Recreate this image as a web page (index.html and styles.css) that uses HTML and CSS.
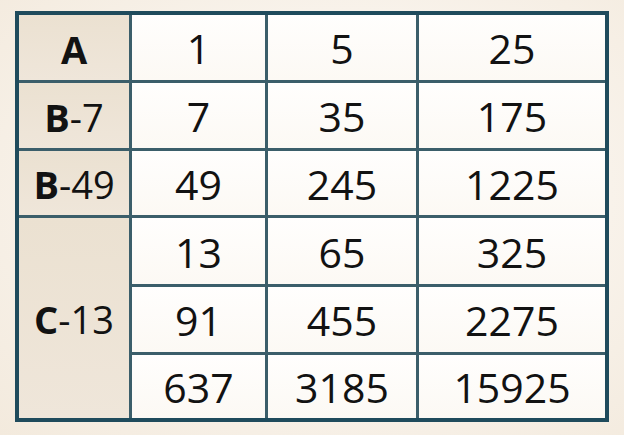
FILE: index.html
```html
<!DOCTYPE html>
<html>
<head>
<meta charset="utf-8">
<link rel="stylesheet" href="styles.css">
</head>
<body>
<div class="page">
  <div class="grid">
    <div class="cell head"><b>A</b></div>
    <div class="cell">1</div>
    <div class="cell">5</div>
    <div class="cell">25</div>

    <div class="cell head"><b>B</b>-7</div>
    <div class="cell">7</div>
    <div class="cell">35</div>
    <div class="cell">175</div>

    <div class="cell head"><b>B</b>-49</div>
    <div class="cell">49</div>
    <div class="cell">245</div>
    <div class="cell">1225</div>

    <div class="cell head span3"><b>C</b>-13</div>
    <div class="cell">13</div>
    <div class="cell">65</div>
    <div class="cell">325</div>

    <div class="cell">91</div>
    <div class="cell">455</div>
    <div class="cell">2275</div>

    <div class="cell">637</div>
    <div class="cell">3185</div>
    <div class="cell">15925</div>
  </div>
</div>
</body>
</html>
```
FILE: styles.css
```css
html, body {
  margin: 0;
  padding: 0;
}
body {
  width: 624px;
  height: 435px;
  overflow: hidden;
  background: radial-gradient(ellipse at 55% 45%, #fcfaf6 0%, #f8f2ea 55%, #f3eadd 100%);
  font-family: "Open Sans", "Liberation Sans", sans-serif;
  color: #121212;
}
.page {
  padding: 11px 0 0 15px;
}
.grid {
  display: grid;
  grid-template-columns: 110px 133px 148px 186px;
  grid-template-rows: 65px 65px 64px 66px 65px 63px;
  gap: 3px;
  width: 586px;
  border: 4px solid #1f4b5c;
  background: #3b5e6a;
}
.cell {
  display: flex;
  align-items: center;
  justify-content: center;
  font-size: 41px;
  line-height: 1;
  padding-top: 2px;
  box-sizing: border-box;
  background: linear-gradient(180deg, #fffefd 0%, #fcf9f4 100%);
}
.head {
  font-size: 38px;
  background: linear-gradient(180deg, #ebe1d1 0%, #efe6da 100%);
}
.head b {
  font-weight: 700;
}
.span3 {
  grid-row: span 3;
}
```
